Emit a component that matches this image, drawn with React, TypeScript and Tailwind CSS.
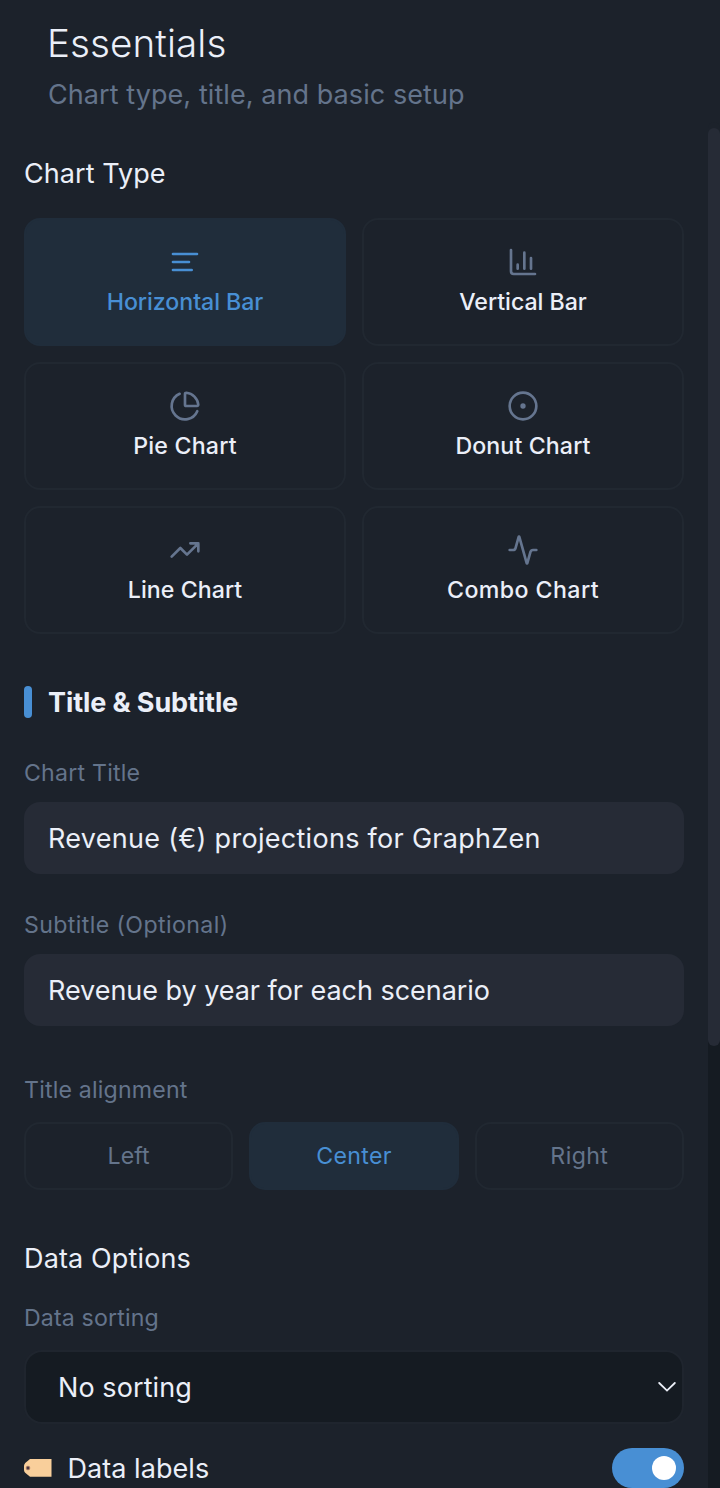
import type { ReactNode } from "react";

type Option = { label: string; tracking: string; icon: ReactNode };

const chartTypes: Option[] = [
  {
    label: "Horizontal Bar",
    tracking: "tracking-[-0.05px]",
    icon: <path d="M21 6H3M15 12H3M17 18H3" />,
  },
  {
    label: "Vertical Bar",
    tracking: "tracking-[-0.03px]",
    icon: <path d="M3 3v16a2 2 0 0 0 2 2h16M18 17V9M13 17V5M8 17v-3" />,
  },
  {
    label: "Pie Chart",
    tracking: "tracking-[0.22px]",
    icon: (
      <>
        <path d="M21 12c.552 0 1.005-.449.95-.998a10 10 0 0 0-8.953-8.951c-.55-.055-.998.398-.998.95v8a1 1 0 0 0 1 1z" />
        <path d="M21.21 15.89A10 10 0 1 1 8 2.83" />
      </>
    ),
  },
  {
    label: "Donut Chart",
    tracking: "tracking-[0.12px]",
    icon: (
      <>
        <circle cx="12" cy="12" r="10" />
        <circle cx="12" cy="12" r="1" />
      </>
    ),
  },
  {
    label: "Line Chart",
    tracking: "tracking-[0.05px]",
    icon: <path d="M16 7h6v6M22 7l-8.5 8.5-5-5L2 17" />,
  },
  {
    label: "Combo Chart",
    tracking: "tracking-[0.42px]",
    icon: (
      <path d="M22 12h-2.48a2 2 0 0 0-1.93 1.46l-2.35 8.36a.25.25 0 0 1-.48 0L9.24 2.18a.25.25 0 0 0-.48 0l-2.35 8.36A2 2 0 0 1 4.49 12H2" />
    ),
  },
];

const alignments = [
  { label: "Left", tracking: "tracking-[0.04px]" },
  { label: "Center", tracking: "tracking-[0.31px]" },
  { label: "Right", tracking: "tracking-[0.4px]" },
];

function ChartCard({ label, tracking, icon, active }: Option & { active: boolean }) {
  return (
    <button
      className={`flex h-32 flex-col items-center rounded-2xl border-2 pt-[26px] ${
        active ? "border-[#202d3b] bg-[#202d3b] text-[#488fd4]" : "border-[#212831] text-[#ebeff8]"
      }`}
    >
      <svg
        viewBox="0 0 24 24"
        className={`size-8 ${active ? "text-[#488fd4]" : "text-[#65758f]"}`}
        fill="none"
        stroke="currentColor"
        strokeWidth="2"
        strokeLinecap="round"
        strokeLinejoin="round"
      >
        {icon}
      </svg>
      <span className={`mt-2 text-[23.16px] leading-8 font-medium ${tracking}`}>{label}</span>
    </button>
  );
}

function Field({ label, value, labelClass, valueClass }: { label: string; value: string; labelClass: string; valueClass: string }) {
  return (
    <div className="flex flex-col">
      <span className={`text-[23.16px] leading-8 text-[#64748b] ${labelClass}`}>{label}</span>
      <div className="mt-[13px] flex h-[72px] items-center rounded-2xl bg-[#262b36] px-6 pt-0.5">
        <span className={`text-[27px] ${valueClass}`}>{value}</span>
      </div>
    </div>
  );
}

export default function App() {
  return (
    <div className="flex h-[1488px] w-[720px] flex-col overflow-hidden bg-[#1c222b] font-['Inter','Liberation_Sans',sans-serif] whitespace-nowrap text-[#ebeff8]">
      <header className="flex h-32 shrink-0 flex-col px-12 pt-[19px]">
        <h1 className="-ml-px text-[38.6px] leading-[48px] font-[330] tracking-[0.1px]">Essentials</h1>
        <p className="mt-[10px] text-[27px] leading-9 tracking-[0.07px] text-[#64748b]">Chart type, title, and basic setup</p>
      </header>

      <div className="flex min-h-0 flex-1">
        <main className="flex w-[708px] flex-col pr-6 pl-6 pt-[28px]">
          <h2 className="text-[27px] leading-9 font-[430] tracking-[0.06px]">Chart Type</h2>
          <div className="mt-[26px] grid grid-cols-2 gap-4">
            {chartTypes.map((type, index) => (
              <ChartCard key={type.label} {...type} active={index === 0} />
            ))}
          </div>

          <div className="mt-[52px] flex h-8 items-center gap-4">
            <span className="h-8 w-2 rounded-full bg-[#488fd4]" />
            <h2 className="pt-0.5 text-[27px] leading-8 font-bold tracking-[-0.1px]">Title &amp; Subtitle</h2>
          </div>

          <div className="mt-[39px] flex flex-col gap-[35px]">
            <Field label="Chart Title" value="Revenue (€) projections for GraphZen" labelClass="tracking-[0.2px]" valueClass="tracking-[0.29px]" />
            <Field label="Subtitle (Optional)" value="Revenue by year for each scenario" labelClass="tracking-[0.38px]" valueClass="tracking-[-0.04px]" />
          </div>

          <span className="mt-12 text-[23.16px] leading-8 tracking-[0.18px] text-[#64748b]">Title alignment</span>
          <div className="mt-4 grid grid-cols-3 gap-4">
            {alignments.map(({ label, tracking }) => (
              <button
                key={label}
                className={`h-[68px] rounded-2xl border-2 text-[23.16px] ${tracking} ${
                  label === "Center" ? "border-[#202d3b] bg-[#202d3b] text-[#488fd4]" : "border-[#212831] text-[#64748b]"
                }`}
              >
                {label}
              </button>
            ))}
          </div>

          <h2 className="mt-[51px] text-[27px] leading-9 font-[430] tracking-[0.14px]">Data Options</h2>
          <span className="mt-[25px] text-[23.16px] leading-8 tracking-[0.14px] text-[#64748b]">Data sorting</span>
          <div className="mt-4 flex h-[74px] shrink-0 items-center justify-between rounded-[18px] border-2 border-[#1f252e] bg-[#151b22] pr-1.5 pl-8">
            <span className="pt-0.5 text-[27px] tracking-[0.08px]">No sorting</span>
            <svg viewBox="0 0 18 12" className="h-3 w-[18px]" fill="none" stroke="currentColor" strokeWidth="1.8" strokeLinecap="round">
              <path d="m1.2 2 7.8 7.6L16.8 2" />
            </svg>
          </div>

          <div className="mt-6 flex h-10 shrink-0 items-center">
            <svg viewBox="0 0 28 18" className="h-[18px] w-7">
              <path d="M6 0H27.5V17.8H6L1.2 13.8Q0 12.6 0 11V7Q0 5.4 1.2 4Z" fill="#f9cf9b" />
              <circle cx="4" cy="9" r="1.9" fill="#4a3540" stroke="#b98a6c" strokeWidth=".7" />
            </svg>
            <span className="ml-[15.5px] pt-0.5 text-[27px] tracking-[0.05px]">Data labels</span>
            <span className="ml-auto flex h-10 w-[72px] items-center justify-end rounded-full bg-[#488fd4] pr-2">
              <span className="size-6 rounded-full bg-white" />
            </span>
          </div>
        </main>

        <div className="w-3 bg-[#151b22]">
          <div className="h-[918px] rounded-full bg-[#262b36] shadow-[0_-6px_0_0_#1c222b]" />
        </div>
      </div>
    </div>
  );
}
